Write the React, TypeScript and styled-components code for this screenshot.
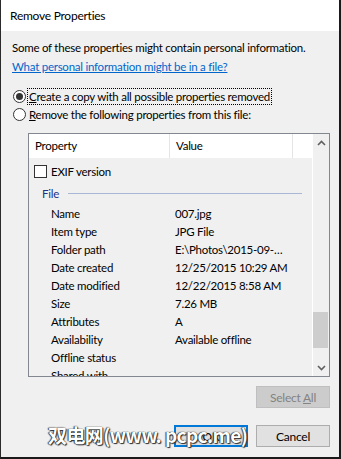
import React from 'react';
import styled, { createGlobalStyle } from 'styled-components';

const GlobalStyle = createGlobalStyle`
  html, body {
    margin: 0;
    padding: 0;
    background: #f0f0f0;
  }
  body {
    font-family: Lato, 'Noto Sans', sans-serif;
    font-size: 11.5px;
    letter-spacing: -0.25px;
    color: #000;
  }
`;

const Window = styled.div`
  box-sizing: border-box;
  width: 341px;
  height: 459px;
  background: #f0f0f0;
  border-left: 1px solid #2b2b2b;
  border-right: 2px solid #1a1a1a;
  border-bottom: 2px solid #1a1a1a;
  display: flex;
  flex-direction: column;
  overflow: hidden;
`;

const TitleBar = styled.div`
  height: 31px;
  background: #fff;
  display: flex;
  align-items: center;
  padding-left: 9px;
  flex-shrink: 0;
  font-size: 12px;
`;

const Body = styled.div`
  position: relative;
  flex: 1;
  display: flex;
  flex-direction: column;
  padding: 8px 9px 0 11px;
`;

const Line = styled.div`
  line-height: 18px;
  height: 18px;
  white-space: nowrap;
`;

const Link = styled(Line)`
  margin-top: 1px;
  color: #0066cc;
  text-decoration: underline;
`;

const Options = styled.div`
  margin-top: 11px;
  display: flex;
  flex-direction: column;
`;

const RadioRow = styled.div`
  height: 18px;
  display: flex;
  align-items: center;
  gap: 2px;
  margin-left: 1px;
`;

const Radio = styled.span<{ $checked?: boolean }>`
  box-sizing: border-box;
  width: 13px;
  height: 13px;
  border-radius: 50%;
  border: 1px solid #333;
  background: #fff;
  display: flex;
  align-items: center;
  justify-content: center;
  &::after {
    content: '';
    width: 7px;
    height: 7px;
    border-radius: 50%;
    background: ${(p) => (p.$checked ? '#333' : 'transparent')};
  }
`;

const RadioLabel = styled.span<{ $focused?: boolean }>`
  line-height: 15px;
  padding: 0 1px;
  outline: ${(p) => (p.$focused ? '1px dotted #000' : 'none')};
  white-space: nowrap;
`;

const Key = styled.span`
  text-decoration: underline;
`;

const ListBox = styled.div`
  box-sizing: border-box;
  margin: 10px 0 0 16px;
  height: 244px;
  border: 1px solid #828790;
  display: flex;
  background: #f0f0f0;
`;

const ListMain = styled.div`
  flex: 1;
  display: flex;
  flex-direction: column;
  min-width: 0;
`;

const Header = styled.div`
  height: 24px;
  background: #fff;
  display: grid;
  grid-template-columns: 141px 123px 1fr;
  flex-shrink: 0;
`;

const HeaderCell = styled.div`
  line-height: 24px;
  padding-left: 6px;
  border-right: 1px solid #e5e5e5;
  &:last-child {
    border-right: none;
  }
`;

const Viewport = styled.div`
  flex: 1;
  overflow: hidden;
`;

const Rows = styled.div`
  margin-top: -17px;
  display: flex;
  flex-direction: column;
`;

const CheckRow = styled.div`
  height: 20px;
  display: flex;
  align-items: center;
  gap: 4px;
  padding-left: 5px;
  white-space: nowrap;
`;

const CheckBox = styled.span`
  box-sizing: border-box;
  width: 13px;
  height: 13px;
  border: 1px solid #333;
  background: #fff;
`;

const Group = styled.div`
  height: 24px;
  display: flex;
  align-items: center;
  gap: 9px;
  padding: 0 10px 0 13px;
  color: #1e3287;
  &::after {
    content: '';
    flex: 1;
    height: 1px;
    background: #a8b7d6;
  }
`;

const Item = styled.div`
  height: 18px;
  line-height: 18px;
  display: grid;
  grid-template-columns: 124px 1fr;
  padding-left: 22px;
  white-space: nowrap;
`;

const ScrollBar = styled.div`
  width: 16px;
  border-left: 1px solid #fff;
  display: flex;
  flex-direction: column;
`;

const Arrow = styled.div`
  height: 17px;
  display: flex;
  align-items: center;
  justify-content: center;
  flex-shrink: 0;
`;

const Track = styled.div`
  flex: 1;
  display: flex;
  flex-direction: column;
`;

const Thumb = styled.div`
  width: 15px;
  height: 36px;
  background: #cdcdcd;
`;

const Footer = styled.div`
  display: flex;
  flex-direction: column;
  align-items: flex-end;
`;

const ButtonRow = styled.div`
  display: flex;
  gap: 8px;
  margin-top: 17px;
`;

const Button = styled.div<{ $disabled?: boolean; $default?: boolean }>`
  box-sizing: border-box;
  width: 74px;
  height: 22px;
  display: flex;
  align-items: center;
  justify-content: center;
  white-space: pre;
  font-size: 12px;
  background: ${(p) => (p.$disabled ? '#cccccc' : '#e1e1e1')};
  border: ${(p) =>
    p.$default ? '2px solid #0078d7' : p.$disabled ? '1px solid #bfbfbf' : '1px solid #adadad'};
  color: ${(p) => (p.$disabled ? '#838383' : '#000')};
`;

const Watermark = styled.div`
  position: absolute;
  left: 47px;
  bottom: 9px;
  font-family: 'Noto Sans CJK SC', 'Noto Sans', sans-serif;
  font-size: 19px;
  font-weight: 700;
  letter-spacing: -0.6px;
  color: #fff;
  white-space: nowrap;
  text-shadow: 0 0 1px #000, 1px 1px 1px #333, -1px 0 1px #555;
  pointer-events: none;
`;

const Chevron = ({ up }: { up?: boolean }) => (
  <svg width="9" height="6" viewBox="0 0 9 6">
    <path
      d={up ? 'M1 5 L4.5 1.5 L8 5' : 'M1 1 L4.5 4.5 L8 1'}
      fill="none"
      stroke="#606060"
      strokeWidth="1.6"
    />
  </svg>
);

const fileProps: [string, string][] = [
  ['Name', '007.jpg'],
  ['Item type', 'JPG File'],
  ['Folder path', 'E:\\Photos\\2015-09-…'],
  ['Date created', '12/25/2015 10:29 AM'],
  ['Date modified', '12/22/2015 8:58 AM'],
  ['Size', '7.26 MB'],
  ['Attributes', 'A'],
  ['Availability', 'Available offline'],
  ['Offline status', ''],
  ['Shared with', ''],
];

export default function App() {
  return (
    <Window>
      <GlobalStyle />
      <TitleBar>Remove Properties</TitleBar>
      <Body>
        <Line>Some of these properties might contain personal information.</Line>
        <Link>What personal information might be in a file?</Link>
        <Options>
          <RadioRow>
            <Radio $checked />
            <RadioLabel $focused>
              <Key>C</Key>reate a copy with all possible properties removed
            </RadioLabel>
          </RadioRow>
          <RadioRow>
            <Radio />
            <RadioLabel>
              <Key>R</Key>emove the following properties from this file:
            </RadioLabel>
          </RadioRow>
        </Options>
        <ListBox>
          <ListMain>
            <Header>
              <HeaderCell>Property</HeaderCell>
              <HeaderCell>Value</HeaderCell>
              <HeaderCell />
            </Header>
            <Viewport>
              <Rows>
                <CheckRow>
                  <CheckBox />
                  Digital zoom
                </CheckRow>
                <CheckRow>
                  <CheckBox />
                  EXIF version
                </CheckRow>
                <Group>File</Group>
                {fileProps.map(([name, value]) => (
                  <Item key={name}>
                    <span>{name}</span>
                    <span>{value}</span>
                  </Item>
                ))}
              </Rows>
            </Viewport>
          </ListMain>
          <ScrollBar>
            <Arrow>
              <Chevron up />
            </Arrow>
            <Track>
              <Thumb style={{ marginTop: 161 }} />
            </Track>
            <Arrow>
              <Chevron />
            </Arrow>
          </ScrollBar>
        </ListBox>
        <Footer>
          <Button $disabled style={{ marginTop: 9 }}>
            <span>
              Select <Key>A</Key>ll
            </span>
          </Button>
          <ButtonRow>
            <Button $default>OK</Button>
            <Button>Cancel</Button>
          </ButtonRow>
        </Footer>
        <Watermark>双电网(www. pcpc.me)</Watermark>
      </Body>
    </Window>
  );
}
